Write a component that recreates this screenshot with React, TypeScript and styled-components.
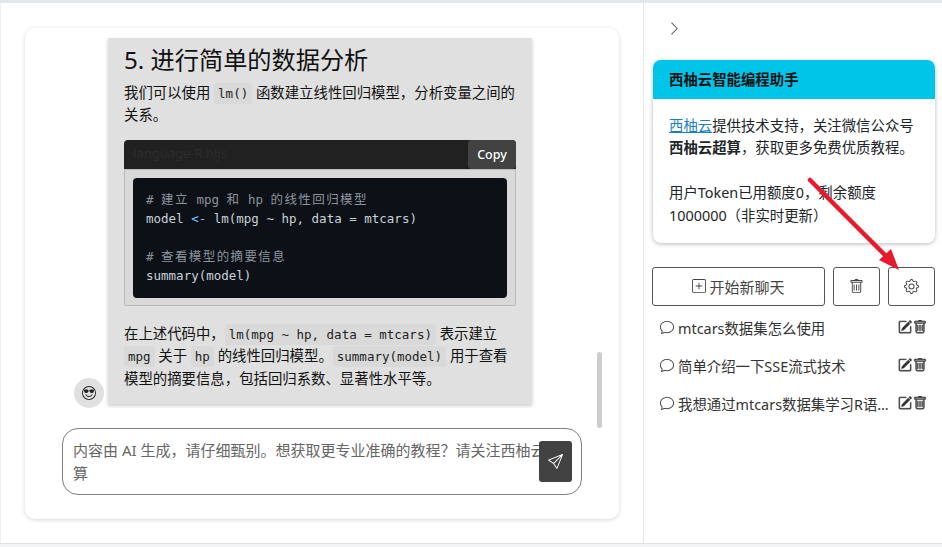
import React from "react";
import styled, { createGlobalStyle } from "styled-components";
import { BsChevronRight, BsPlusSquare, BsTrash, BsGear, BsChat, BsPencilSquare, BsSend, BsEmojiSunglasses } from "react-icons/bs";

const Global = createGlobalStyle`
  html, body { margin: 0; padding: 0; background: #f3f4f6; }
  body { width: 942px; height: 547px; overflow: hidden; font-family: "Noto Sans", "Noto Sans CJK SC", sans-serif; color: #212529; }
  * { box-sizing: border-box; }
`;
const Page = styled.div`
  position: relative; width: 942px; height: 544px; background: #fff;
  border-top: 3px solid #e3e6ea; border-bottom: 1px solid #e0e2e6;
  display: flex;
`;
const Main = styled.div`
  width: 644px; flex: none; border-right: 1px solid #e6e6e6; border-left: 1px solid #eeeeee;
  padding: 25px 24px 24px 24px;
`;
const ChatCard = styled.div`
  position: relative; height: 491px; border-radius: 10px; background: #fff;
  box-shadow: 0 1px 4px rgba(0,0,0,.16);
  padding-top: 9px; display: flex; flex-direction: column;
`;
const Messages = styled.div`
  height: 371px; overflow: hidden; display: flex; flex-direction: column; justify-content: flex-end;
  padding: 0 0 4px 49px; flex: none;
`;
const Row = styled.div`display: flex; align-items: flex-end; gap: 4px;`;
const Avatar = styled.div`
  width: 30px; height: 30px; border-radius: 50%; background: #e0e0e0; flex: none;
  display: flex; align-items: center; justify-content: center; font-size: 14px; color: #222; margin-bottom: -4px;
`;
const Bubble = styled.div`
  width: 424px; flex: none; background: #e0e0e0; padding: 6px 16px 14px;
  box-shadow: 0 2px 4px rgba(0,0,0,.2); font-size: 14.4px; line-height: 22.5px; color: #111;
`;
const Heading = styled.h3`
  margin: 0 0 6px; font-size: 24.2px; line-height: 32px; font-weight: 400; color: #111;
`;
const Para = styled.p`margin: 0;`;
const InlineCode = styled.code`
  font-family: "DejaVu Sans Mono", monospace; font-size: 12.5px; line-height: 1; background: #d9d9d9;
  border-radius: 3px; padding: 3px 4px; color: #222;
`;
const CodeWrap = styled.div`position: relative; margin: 13px 0 17px;`;
const CodeHead = styled.div`
  height: 29px; background: #212121; border-radius: 4px 4px 0 0; color: #2c2c2c;
  font-size: 13px; line-height: 27px; padding-left: 9px; display: flex; justify-content: space-between;
`;
const CopyBtn = styled.div`
  width: 48px; height: 29px; background: #424242; border-radius: 4px; color: #fff;
  font-size: 12.5px; font-weight: 500; line-height: 29px; text-align: center;
`;
const Pre = styled.div`
  height: 137px; background: #d9d9d9; border: 1px solid #bbb; border-radius: 0 0 2px 2px; padding: 8px;
`;
const CodeBlock = styled.div`
  height: 120px; background: #0d1117; border-radius: 4px; padding: 12px 13px;
  font-family: "DejaVu Sans Mono", "Noto Sans CJK SC", monospace; font-size: 12.5px; line-height: 19px; color: #c9d1d9;
  white-space: pre;
`;
const Comment = styled.span`color: #8b949e;`;
const Cjk = styled.span`letter-spacing: 1.4px;`;
const Op = styled.span`color: #79c0ff;`;
const ScrollThumb = styled.div`
  position: absolute; left: 572px; top: 324px; width: 5px; height: 76px; border-radius: 3px; background: #cdcdcd;
`;
const InputBox = styled.div`
  position: relative; margin-left: 37px; margin-top: 20px; width: 520px; height: 67px;
  border: 1px solid #808080; border-radius: 16px; padding: 10px 10px;
  font-size: 15px; line-height: 23px; color: #666; overflow: hidden;
`;
const SendBtn = styled.div`
  position: absolute; right: 9px; top: 12px; width: 33px; height: 41px; background: #424242; border-radius: 3px;
  color: #fff; display: flex; align-items: center; justify-content: center; font-size: 15px;
`;
const Side = styled.div`width: 298px; min-width: 0; flex: none; padding: 16px 7px 0 8px; display: flex; flex-direction: column;`;
const Toggle = styled.div`height: 41px; padding-left: 15px; padding-top: 2px; color: #555; font-size: 15px; display: flex; align-items: flex-start;`;
const InfoCard = styled.div`
  width: 282px; height: 183px; margin-left: 1px; border-radius: 8px; overflow: hidden; background: #fff;
  box-shadow: 0 1px 4px rgba(0,0,0,.28);
`;
const InfoHead = styled.div`
  height: 39px; background: #00c5e8; font-size: 14.4px; font-weight: 700; line-height: 39px; padding-left: 16px; color: #111;
`;
const InfoBody = styled.div`padding: 16px 16px; font-size: 14.4px; line-height: 22.4px; color: #212529;`;
const InfoLink = styled.a`text-decoration: underline; color: #1a7fc4;`;
const Buttons = styled.div`display: flex; gap: 8px; margin-top: 24px;`;
const Btn = styled.div<{ $w: number }>`
  width: ${(p) => p.$w}px; height: 39px; border: 1px solid #555; border-radius: 3px; color: #444;
  display: flex; align-items: center; justify-content: center; gap: 3px; font-size: 15px; padding-bottom: 1px;
`;
const List = styled.div`margin-top: 2px;`;
const Item = styled.div`
  height: 38px; display: flex; align-items: center; padding: 0 8px; font-size: 14.4px; color: #333;
`;
const ItemIcon = styled.span`font-size: 14px; display: flex; margin-right: 4px; flex: none;`;
const ItemText = styled.span`flex: 1; min-width: 0; overflow: hidden; text-overflow: ellipsis; white-space: nowrap;`;
const ItemTools = styled.span`
  display: flex; gap: 1px; font-size: 14px; margin-left: 6px; flex: none; color: #333;
  svg { stroke: currentColor; stroke-width: 0.5; }
`;
const ArrowSvg = styled.svg`position: absolute; left: 800px; top: 168px; pointer-events: none;`;

const items = ["mtcars数据集怎么使用", "简单介绍一下SSE流式技术", "我想通过mtcars数据集学习R语言的线性回归模型"];

export default function App() {
  return (
    <Page>
      <Global />
      <Main>
        <ChatCard>
          <Messages>
            <Row>
              <Avatar><BsEmojiSunglasses /></Avatar>
              <Bubble>
                <Heading>5. 进行简单的数据分析</Heading>
                <Para>我们可以使用 <InlineCode>lm()</InlineCode> 函数建立线性回归模型，分析变量之间的关系。</Para>
                <CodeWrap>
                  <CodeHead>language-R hljs<CopyBtn>Copy</CopyBtn></CodeHead>
                  <Pre>
                    <CodeBlock>
                      <Comment># <Cjk>建立</Cjk> mpg <Cjk>和</Cjk> hp <Cjk>的线性回归模型</Cjk></Comment>{"\n"}model <Op>&lt;-</Op> lm(mpg ~ hp, data = mtcars){"\n\n"}<Comment># <Cjk>查看模型的摘要信息</Cjk></Comment>{"\n"}summary(model)
                    </CodeBlock>
                  </Pre>
                </CodeWrap>
                <Para>在上述代码中，<InlineCode>lm(mpg ~ hp, data = mtcars)</InlineCode> 表示建立 <InlineCode>mpg</InlineCode> 关于 <InlineCode>hp</InlineCode> 的线性回归模型。<InlineCode>summary(model)</InlineCode> 用于查看模型的摘要信息，包括回归系数、显著性水平等。</Para>
              </Bubble>
            </Row>
          </Messages>
          <ScrollThumb />
          <InputBox>
            内容由 AI 生成，请仔细甄别。想获取更专业准确的教程？请关注西柚云超算
            <SendBtn><BsSend /></SendBtn>
          </InputBox>
        </ChatCard>
      </Main>
      <Side>
        <Toggle><BsChevronRight /></Toggle>
        <InfoCard>
          <InfoHead>西柚云智能编程助手</InfoHead>
          <InfoBody>
            <InfoLink>西柚云</InfoLink>提供技术支持，关注微信公众号<br />
            <b>西柚云超算</b>，获取更多免费优质教程。<br /><br />
            用户Token已用额度0，剩余额度<br />1000000（非实时更新）
          </InfoBody>
        </InfoCard>
        <Buttons>
          <Btn $w={173}><BsPlusSquare size={14} />开始新聊天</Btn>
          <Btn $w={47}><BsTrash size={15} /></Btn>
          <Btn $w={47}><BsGear size={15} /></Btn>
        </Buttons>
        <List>
          {items.map((t) => (
            <Item key={t}>
              <ItemIcon><BsChat /></ItemIcon>
              <ItemText>{t}</ItemText>
              <ItemTools><BsPencilSquare /><BsTrash /></ItemTools>
            </Item>
          ))}
        </List>
      </Side>
      <ArrowSvg width="105" height="105" viewBox="0 0 105 105">
        <line x1="10" y1="9" x2="86" y2="85" stroke="#e8192c" strokeWidth="4.5" strokeLinecap="round" />
        <polygon points="99,99 79,89 91,78" fill="#e8192c" />
      </ArrowSvg>
    </Page>
  );
}
